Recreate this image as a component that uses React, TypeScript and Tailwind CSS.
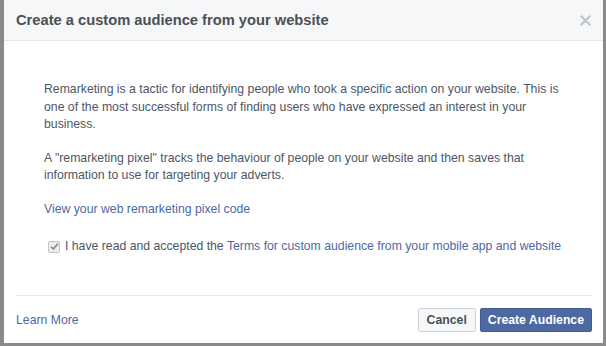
import React from 'react';

const font = { fontFamily: '"Liberation Sans", Arial, Helvetica, sans-serif' };

function CloseIcon() {
  return (
    <svg width="11" height="11" viewBox="0 0 11 11" className="block">
      <path d="M1.5 1.5 L9.5 9.5 M9.5 1.5 L1.5 9.5" stroke="#bec3c9" strokeWidth="2.2" strokeLinecap="square" />
    </svg>
  );
}

function CheckedBox() {
  return (
    <span className="w-[12px] h-[12px] shrink-0 border border-[#c4c4c4] bg-[#eeeeee] rounded-[2px] flex items-center justify-center">
      <svg width="9" height="9" viewBox="0 0 9 9">
        <path d="M1 4.6 L3.4 7 L8 1.6" stroke="#8f8f8f" strokeWidth="1.7" fill="none" />
      </svg>
    </span>
  );
}

export default function App() {
  return (
    <div className="w-[606px] h-[346px] bg-[#8a8a8a] pl-[4px] pr-[3px] pb-[3px] overflow-hidden" style={font}>
      <div className="h-full bg-white flex flex-col">
        {/* header */}
        <div className="h-[41px] shrink-0 bg-[#f6f7f9] border-b border-[#e5e5e5] flex items-center justify-between pl-[12px] pr-[12px]">
          <span className="text-[14.7px] font-bold text-[#4b4f56] leading-none">Create a custom audience from your website</span>
          <CloseIcon />
        </div>

        {/* body */}
        <div className="flex-1 pl-[40px] pr-[36px] pt-[40px] text-[12.25px] text-[#4e5665] leading-[17.5px]">
          <p className="mb-[16px]">
            Remarketing is a tactic for identifying people who took a specific action on your website. This is one of the most successful forms of finding users who have expressed an interest in your business.
          </p>
          <p className="mb-[16px]">
            A "remarketing pixel" tracks the behaviour of people on your website and then saves that information to use for targeting your adverts.
          </p>
          <a className="block text-[#4e69a2] mb-[20px]">View your web remarketing pixel code</a>
          <label className="flex items-center gap-[5px] pl-[4px]">
            <CheckedBox />
            <span>
              I have read and accepted the <span className="text-[#4e69a2]">Terms for custom audience from your mobile app and website</span>
            </span>
          </label>
        </div>

        {/* footer */}
        <div className="ml-[12px] mr-[11px] border-t border-[#e5e5e5] pt-[12px] pb-[11px] flex items-center justify-between">
          <a className="text-[12.25px] text-[#4e69a2]">Learn More</a>
          <div className="flex items-center gap-[4px]">
            <button className="h-[24px] px-[8px] text-[12.25px] font-bold text-[#4b4f56] bg-[#f6f7f9] border border-[#ced0d4] rounded-[2px]">
              Cancel
            </button>
            <button className="h-[24px] px-[7px] text-[12.25px] font-bold text-white bg-[#4e69a2] border border-[#435a8b] rounded-[2px]">
              Create Audience
            </button>
          </div>
        </div>
      </div>
    </div>
  );
}
